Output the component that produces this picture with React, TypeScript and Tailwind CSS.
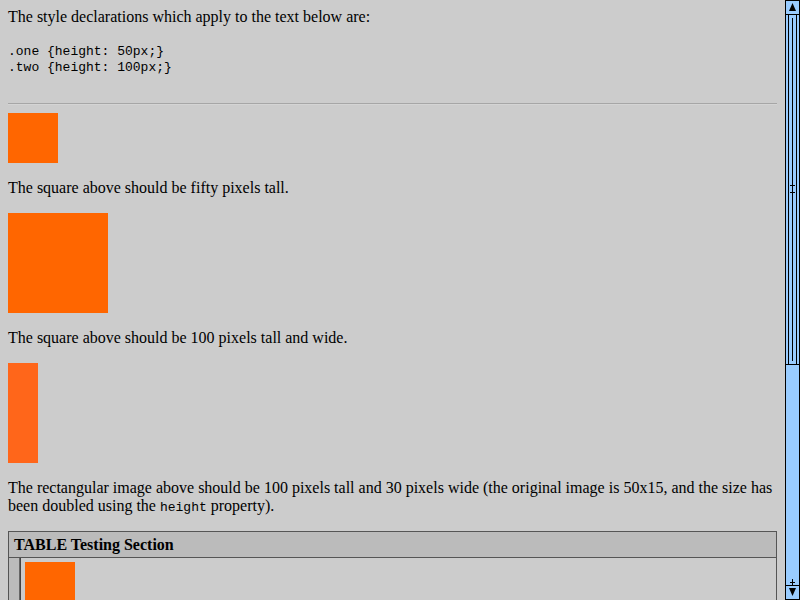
const serif = "font-['Liberation_Serif',serif]";
const mono = "font-['Liberation_Mono',monospace]";

function Scrollbar() {
  return (
    <svg width="15" height="600" viewBox="0 0 15 600" className="block shrink-0">
      <rect x="0" y="0" width="15" height="600" fill="#99ccff" />
      <g stroke="#000" strokeWidth="1" fill="none">
        <line x1="0.5" y1="0" x2="0.5" y2="600" />
        <line x1="14.5" y1="0" x2="14.5" y2="600" />
        <line x1="0" y1="0.5" x2="15" y2="0.5" />
        <line x1="0" y1="14.5" x2="15" y2="14.5" />
        {/* thumb */}
        <line x1="3.5" y1="15" x2="3.5" y2="364" />
        <line x1="11.5" y1="15" x2="11.5" y2="364" />
        <line x1="7.5" y1="18" x2="7.5" y2="361" />
        <line x1="0" y1="364.5" x2="15" y2="364.5" />
        <line x1="5" y1="185.5" x2="10" y2="185.5" />
        <line x1="5" y1="192.5" x2="10" y2="192.5" />
        {/* bottom */}
        <line x1="7.5" y1="579" x2="7.5" y2="585" />
        <line x1="5" y1="582.5" x2="10" y2="582.5" />
        <line x1="0" y1="585.5" x2="15" y2="585.5" />
        <line x1="0" y1="599.5" x2="15" y2="599.5" />
      </g>
      <polygon points="7.5,3 11,11 4,11" fill="#000" />
      <polygon points="4,588 11,588 7.5,596" fill="#000" />
    </svg>
  );
}

export default function App() {
  return (
    <div className={`flex h-[600px] w-[800px] overflow-hidden bg-[#cccccc] text-black ${serif}`}>
      <div className="h-[600px] w-[785px] overflow-hidden px-[8px] pt-[8px] text-[16px] leading-[18px]">
        <p>The style declarations which apply to the text below are:</p>
        <pre className={`mt-[18px] text-[13px] leading-[16px] ${mono}`}>
          {".one {height: 50px;}\n.two {height: 100px;}"}
        </pre>
        <div className="mt-[27px] mb-[8px] h-[2px] border-t border-b border-t-[#a6a6a6] border-b-[#d4d4d4]" />

        <div className="h-[50px] w-[50px] bg-[#ff6600]" />
        <p className="my-[16px]">The square above should be fifty pixels tall.</p>
        <div className="h-[100px] w-[100px] bg-[#ff6600]" />
        <p className="my-[16px]">The square above should be 100 pixels tall and wide.</p>
        <div className="h-[100px] w-[30px] bg-[#ff661a]" />
        <p className="my-[16px] h-[36px]">
          <span>The rectangular image above should be 100 pixels tall and 30 pixels wide (the original image is 50x15, and the size has</span>
          <br />
          <span>been doubled using the </span>
          <code className={`text-[13px] leading-[12px] ${mono}`}>height</code>
          <span> property).</span>
        </p>

        <div className="border border-[#555555]">
          <div className="h-[26px] border-b border-[#555555] bg-[#bbbbbb] px-[5px] pt-[5px] leading-[16px] font-bold">
            TABLE Testing Section
          </div>
          <div className="flex h-[60px]">
            <div className="w-[11px] border-r border-[#666666] bg-[#bbbbbb]" />
            <div className="flex-1 border-l border-[#444444] p-[4px]">
              <div className="h-[50px] w-[50px] bg-[#ff6600]" />
            </div>
          </div>
        </div>
      </div>
      <Scrollbar />
    </div>
  );
}
